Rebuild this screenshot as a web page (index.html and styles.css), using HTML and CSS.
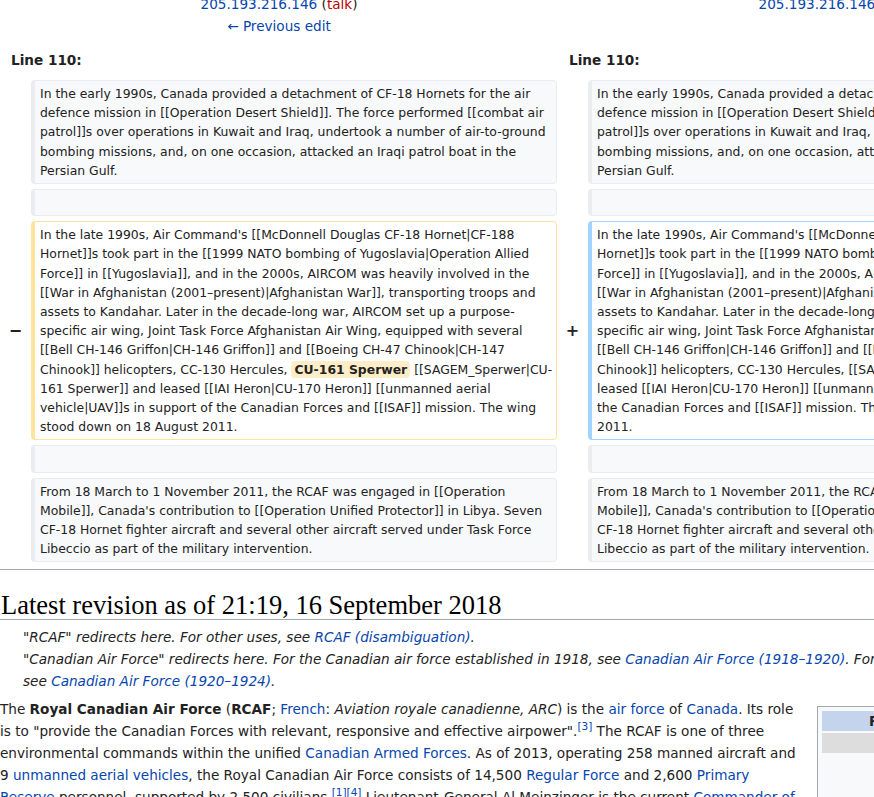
FILE: index.html
```html
<!DOCTYPE html>
<html lang="en">
<head>
<meta charset="utf-8">
<title>Royal Canadian Air Force: Difference between revisions</title>
<link rel="stylesheet" href="styles.css">
</head>
<body>
<div class="page">
  <div class="diff-header">
    <div class="diff-title">
      <div><a class="link" href="#">205.193.216.146</a> <span class="paren">(<a class="red" href="#">talk</a>)</span></div>
      <div><a class="link" href="#">← Previous edit</a></div>
    </div>
    <div class="diff-title">
      <div><a class="link" href="#">205.193.216.146</a> <span class="paren">(<a class="red" href="#">talk</a>)</span></div>
      <div><br></div>
    </div>
  </div>
  <div class="diff-lineno-row">
    <div class="diff-lineno">Line 110:</div>
    <div class="diff-lineno">Line 110:</div>
  </div>
  <div class="diff">
    <div class="marker"></div>
    <div class="cell context">In the early 1990s, Canada provided a detachment of CF-18 Hornets for the air defence mission in [[Operation Desert Shield]]. The force performed [[combat air patrol]]s over operations in Kuwait and Iraq, undertook a number of air-to-ground bombing missions, and, on one occasion, attacked an Iraqi patrol boat in the Persian Gulf.</div>
    <div class="marker"></div>
    <div class="cell context">In the early 1990s, Canada provided a detachment of CF-18 Hornets for the air defence mission in [[Operation Desert Shield]]. The force performed [[combat air patrol]]s over operations in Kuwait and Iraq, undertook a number of air-to-ground bombing missions, and, on one occasion, attacked an Iraqi patrol boat in the Persian Gulf.</div>

    <div class="marker"></div>
    <div class="cell context"><br></div>
    <div class="marker"></div>
    <div class="cell context"><br></div>

    <div class="marker">−</div>
    <div class="cell deleted">In the late 1990s, Air Command's [[McDonnell Douglas CF-18 Hornet|CF-188 Hornet]]s took part in the [[1999 NATO bombing of Yugoslavia|Operation Allied Force]] in [[Yugoslavia]], and in the 2000s, AIRCOM was heavily involved in the [[War in Afghanistan (2001–present)|Afghanistan War]], transporting troops and assets to Kandahar. Later in the decade-long war, AIRCOM set up a purpose-specific air wing, Joint Task Force Afghanistan Air Wing, equipped with several [[Bell CH-146 Griffon|CH-146 Griffon]] and [[Boeing CH-47 Chinook|CH-147 Chinook]] helicopters, CC-130 Hercules, <del class="diffchange">CU-161 Sperwer</del> [[SAGEM_Sperwer|CU-161 Sperwer]] and leased [[IAI Heron|CU-170 Heron]] [[unmanned aerial vehicle|UAV]]s in support of the Canadian Forces and [[ISAF]] mission. The wing stood down on 18 August 2011.</div>
    <div class="marker">+</div>
    <div class="cell added">In the late 1990s, Air Command's [[McDonnell Douglas CF-18 Hornet|CF-188 Hornet]]s took part in the [[1999 NATO bombing of Yugoslavia|Operation Allied Force]] in [[Yugoslavia]], and in the 2000s, AIRCOM was heavily involved in the [[War in Afghanistan (2001–present)|Afghanistan War]], transporting troops and assets to Kandahar. Later in the decade-long war, AIRCOM set up a purpose-specific air wing, Joint Task Force Afghanistan Air Wing, equipped with several [[Bell CH-146 Griffon|CH-146 Griffon]] and [[Boeing CH-47 Chinook|CH-147 Chinook]] helicopters, CC-130 Hercules, [[SAGEM_Sperwer|CU-161 Sperwer]] and leased [[IAI Heron|CU-170 Heron]] [[unmanned aerial vehicle|UAV]]s in support of the Canadian Forces and [[ISAF]] mission. The wing stood down on 18 August 2011.</div>

    <div class="marker"></div>
    <div class="cell context"><br></div>
    <div class="marker"></div>
    <div class="cell context"><br></div>

    <div class="marker"></div>
    <div class="cell context">From 18 March to 1 November 2011, the RCAF was engaged in [[Operation Mobile]], Canada's contribution to [[Operation Unified Protector]] in Libya. Seven CF-18 Hornet fighter aircraft and several other aircraft served under Task Force Libeccio as part of the military intervention.</div>
    <div class="marker"></div>
    <div class="cell context">From 18 March to 1 November 2011, the RCAF was engaged in [[Operation Mobile]], Canada's contribution to [[Operation Unified Protector]] in Libya. Seven CF-18 Hornet fighter aircraft and several other aircraft served under Task Force Libeccio as part of the military intervention.</div>
  </div>

  <hr class="diff-hr">
  <h2 class="current-title">Latest revision as of 21:19, 16 September 2018</h2>

  <div class="hatnotes">
    <div class="hatnote">"RCAF" redirects here. For other uses, see <a class="link" href="#">RCAF (disambiguation)</a>.</div>
    <div class="hatnote">"Canadian Air Force" redirects here. For the Canadian air force established in 1918, see <a class="link" href="#">Canadian Air Force (1918–1920)</a>. For the Canadian air force established in 1920, <span class="nowrap">see <a class="link" href="#">Canadian Air Force (1920–1924)</a>.</span></div>
  </div>

  <div class="content">
    <table class="infobox">
      <tr><th class="infobox-head">Royal Canadian Air Force</th></tr>
      <tr><td class="infobox-sub">Aviation royale canadienne</td></tr>
      <tr><td class="infobox-img"></td></tr>
    </table>
    <p class="para">The <b>Royal Canadian Air Force</b> (<b>RCAF</b>; <a class="link" href="#">French</a>: <i>Aviation royale canadienne, ARC</i>) is the <a class="link" href="#">air force</a> of <a class="link" href="#">Canada</a>. Its role is to "provide the Canadian Forces with relevant, responsive and effective airpower".<sup class="ref"><a class="link" href="#">[3]</a></sup> The RCAF is one of three environmental commands within the unified <a class="link" href="#">Canadian Armed Forces</a>. As of 2013, operating 258 manned aircraft and 9 <a class="link" href="#">unmanned aerial vehicles</a>, the Royal Canadian Air Force consists of 14,500 <a class="link" href="#">Regular Force</a> and 2,600 <a class="link" href="#">Primary Reserve</a> personnel, supported by 2,500 civilians.<sup class="ref"><a class="link" href="#">[1]</a><a class="link" href="#">[4]</a></sup> Lieutenant-General Al Meinzinger is the current <a class="link" href="#">Commander of the Royal Canadian Air Force</a> and Chief of the Air Staff.</p>
  </div>
</div>
</body>
</html>
```

FILE: styles.css
```css
html, body {
  margin: 0;
  padding: 0;
  overflow: hidden;
  background: #ffffff;
}

.page {
  width: 1126px;
  font-family: "DejaVu Sans", sans-serif;
  font-size: 13.6px;
  color: #222222;
}

.link {
  color: #0645ad;
  text-decoration: none;
}

.red {
  color: #ba0000;
  text-decoration: none;
}

.paren {
  color: #222222;
}

.nowrap {
  white-space: nowrap;
}

/* header */
.diff-header {
  display: grid;
  grid-template-columns: 558px 558px;
  margin-top: -7px;
  line-height: 22px;
}

.diff-title {
  text-align: center;
}

.diff-lineno-row {
  display: grid;
  grid-template-columns: 558px 558px;
  margin-top: 12px;
}

.diff-lineno {
  font-weight: bold;
  line-height: 22px;
  padding-left: 11px;
}

/* diff table */
.diff {
  display: grid;
  grid-template-columns: 21px 526px 21px 526px;
  column-gap: 5px;
  row-gap: 5px;
  padding: 9px 5px 7px 5px;
}

.marker {
  display: flex;
  align-items: center;
  justify-content: center;
  font-size: 16px;
  font-weight: bold;
  color: #222222;
}

.cell {
  font-size: 12.4px;
  line-height: 19.2px;
  padding: 3px 3px 3px 5px;
  border: 1px solid #eaecf0;
  border-left-width: 4px;
  border-radius: 4px;
  color: #222222;
  word-wrap: break-word;
}

.context {
  background: #f8f9fa;
  border-color: #eaecf0;
}

.deleted {
  background: #ffffff;
  border-color: #ffe49c;
}

.added {
  background: #ffffff;
  border-color: #a3d3ff;
}

.diffchange {
  text-decoration: none;
  font-weight: bold;
  background: #feeec8;
  border-radius: 4px;
  padding: 1px 3px;
}

.diff-hr {
  border: 0;
  height: 1px;
  background: #a2a9b1;
  margin: 0;
}

.current-title {
  font-family: "Liberation Serif", serif;
  font-weight: normal;
  font-size: 26.5px;
  line-height: 26.5px;
  margin: 22px 0 0 0;
  padding-left: 1px;
  border-bottom: 1px solid #a2a9b1;
  color: #000000;
}

.hatnotes {
  width: 1300px;
  margin-top: 6px;
}

.hatnote {
  font-style: italic;
  line-height: 22px;
  padding-left: 23px;
}

.content {
  width: 1113px;
  margin-top: 6px;
}

.para {
  margin: 0;
  line-height: 22px;
}

.ref {
  font-size: 10.5px;
  line-height: 1;
  vertical-align: super;
}

.infobox {
  float: right;
  width: 296px;
  margin: 8px 0 8px 14px;
  border: 1px solid #a2a9b1;
  background: #f8f9fa;
  border-spacing: 2px;
  padding: 2px;
  font-size: 12px;
}

.infobox-head {
  background: #c4d4ec;
  font-size: 13.6px;
  line-height: 18px;
  text-align: center;
  padding: 1px 4px;
}

.infobox-sub {
  background: #dddddd;
  text-align: center;
  line-height: 18px;
  padding: 1px 4px;
  color: #dddddd;
}

.infobox-img {
  height: 60px;
}
```
